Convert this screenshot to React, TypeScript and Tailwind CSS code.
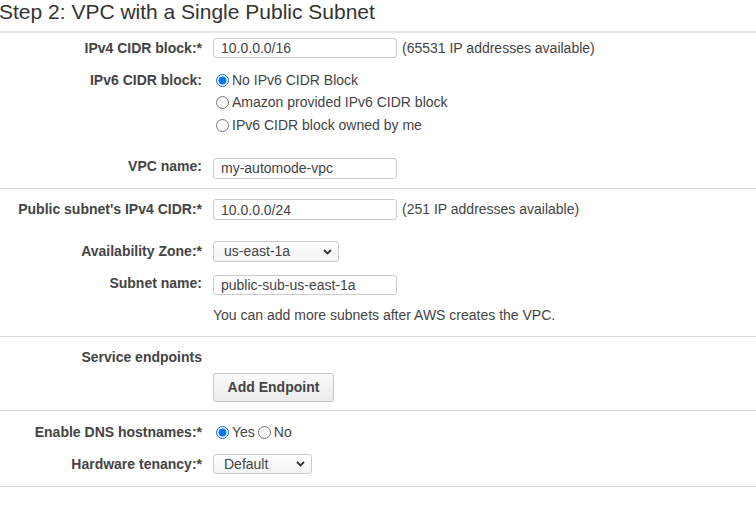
import React from 'react';

const FONT = { fontFamily: '"Liberation Sans", Arial, sans-serif' };

const Label = ({ children }: { children: React.ReactNode }) => (
  <div className="w-[202px] shrink-0 text-right text-[14px] font-bold text-[#444]">{children}</div>
);

const TextBox = ({ value, width = 'w-[184px]' }: { value: string; width?: string }) => (
  <input
    readOnly
    value={value}
    className={`${width} h-full rounded-[3px] border border-[#ccc] bg-white pl-[7px] text-[14px] text-[#444] outline-none`}
  />
);

const Chevron = () => (
  <svg width="9" height="6" viewBox="0 0 9 6" className="shrink-0">
    <path d="M1 1l3.5 3.5L8 1" fill="none" stroke="#333" strokeWidth="1.8" />
  </svg>
);

const FakeSelect = ({ value, width }: { value: string; width: string }) => (
  <div
    className={`${width} flex h-full items-center justify-between rounded-[3px] border border-[#ccc] bg-gradient-to-b from-white to-[#f3f3f3] pl-[10px] pr-[6px] text-[14px] text-[#444]`}
  >
    <span>{value}</span>
    <Chevron />
  </div>
);

const Radio = ({ checked, label, name }: { checked?: boolean; label: string; name: string }) => (
  <label className="flex items-center text-[14px] text-[#444]">
    <input type="radio" name={name} defaultChecked={checked} className="m-0 ml-[3px] mr-[3px] h-[13px] w-[13px]" />
    <span>{label}</span>
  </label>
);

export default function App() {
  return (
    <div className="min-h-[531px] w-[756px] bg-white" style={FONT}>
      <div className="ml-[-1px] h-[31px] text-[21px] leading-[23px] text-[#333]">Step 2: VPC with a Single Public Subnet</div>

      {/* VPC */}
      <div className="border-t-2 border-b border-t-[#e6e6e6] border-b-[#d6d6d6] pt-[5px] pb-[11px]">
        <div className="flex h-[20px] items-center">
          <Label>IPv4 CIDR block:*</Label>
          <div className="ml-[11px] flex h-full items-center">
            <TextBox value="10.0.0.0/16" />
            <span className="ml-[5px] text-[14px] text-[#444]">(65531 IP addresses available)</span>
          </div>
        </div>
        <div className="mt-[11px] flex">
          <div className="flex h-[22px] items-center">
            <Label>IPv6 CIDR block:</Label>
          </div>
          <div className="ml-[11px] flex flex-col">
            <div className="flex h-[22px] items-center"><Radio name="ipv6" checked label="No IPv6 CIDR Block" /></div>
            <div className="flex h-[23px] items-center"><Radio name="ipv6" label="Amazon provided IPv6 CIDR block" /></div>
            <div className="flex h-[22px] items-center"><Radio name="ipv6" label="IPv6 CIDR block owned by me" /></div>
          </div>
        </div>
        <div className="mt-[20px] flex h-[21px] items-center">
          <Label>VPC name:</Label>
          <div className="ml-[11px] h-full"><TextBox value="my-automode-vpc" /></div>
        </div>
      </div>

      {/* Subnet */}
      <div className="border-b border-[#d6d6d6] pt-[10px] pb-[13px]">
        <div className="flex h-[21px] items-center">
          <Label>Public subnet's IPv4 CIDR:*</Label>
          <div className="ml-[11px] flex h-full items-center">
            <TextBox value="10.0.0.0/24" />
            <span className="ml-[5px] text-[14px] text-[#444]">(251 IP addresses available)</span>
          </div>
        </div>
        <div className="mt-[21px] flex h-[21px] items-center">
          <Label>Availability Zone:*</Label>
          <div className="ml-[11px] h-full"><FakeSelect value="us-east-1a" width="w-[126px]" /></div>
        </div>
        <div className="mt-[11px] flex h-[20px] items-center">
          <Label>Subnet name:</Label>
          <div className="ml-[11px] h-full"><TextBox value="public-sub-us-east-1a" /></div>
        </div>
        <div className="mt-[14px] flex h-[16px] items-center">
          <div className="w-[202px] shrink-0" />
          <span className="ml-[11px] text-[14px] text-[#444]">You can add more subnets after AWS creates the VPC.</span>
        </div>
      </div>

      {/* Endpoints */}
      <div className="border-b border-[#d6d6d6] pt-[12px] pb-[8px]">
        <div className="flex h-[16px] items-center">
          <Label>Service endpoints</Label>
        </div>
        <div className="mt-[8px] flex">
          <div className="w-[202px] shrink-0" />
          <button className="ml-[11px] h-[29px] w-[121px] rounded-[3px] border border-[#c6c6c6] bg-gradient-to-b from-[#fafafa] to-[#ebebeb] text-[14px] font-bold text-[#444]">
            Add Endpoint
          </button>
        </div>
      </div>

      {/* DNS */}
      <div className="border-b border-[#d6d6d6] pt-[11px] pb-[12px]">
        <div className="flex h-[20px] items-center">
          <Label>Enable DNS hostnames:*</Label>
          <div className="ml-[11px] flex items-center">
            <Radio name="dns" checked label="Yes" />
            <Radio name="dns" label="No" />
          </div>
        </div>
        <div className="mt-[12px] flex h-[20px] items-center">
          <Label>Hardware tenancy:*</Label>
          <div className="ml-[11px] h-full"><FakeSelect value="Default" width="w-[99px]" /></div>
        </div>
      </div>
    </div>
  );
}
